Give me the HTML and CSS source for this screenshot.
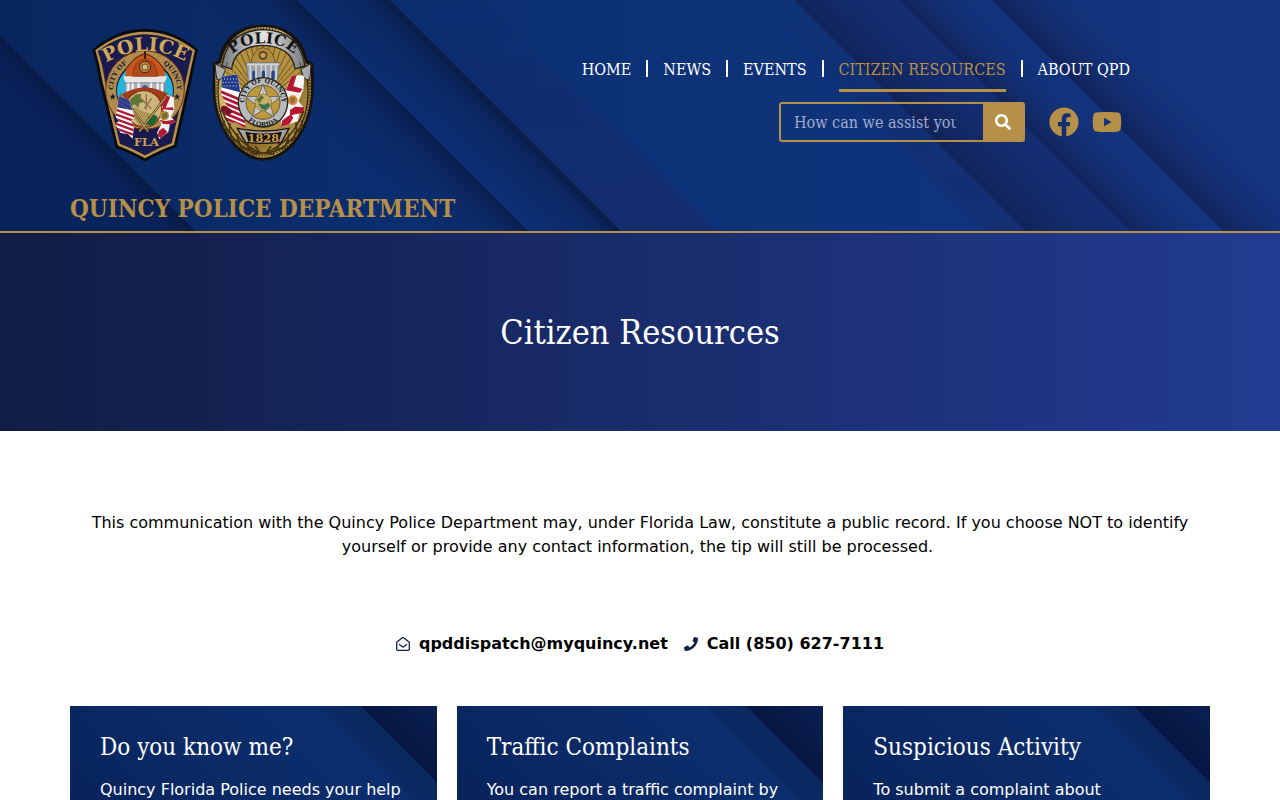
FILE: index.html
```
<!DOCTYPE html>
<html lang="en">
<head>
  <meta charset="UTF-8">
  <meta name="viewport" content="width=device-width, initial-scale=1">
  <title>Citizen Resources - Quincy Police Department</title>
  <link rel="stylesheet" href="styles.css">
</head>
<body>
  <header class="site-header">
    <!-- diagonal bands behind the header -->
    <svg class="header-bg" viewBox="0 0 1280 231" preserveAspectRatio="xMidYMid slice" aria-hidden="true">
      <defs>
        <linearGradient id="base" x1="0" x2="1" y1="0" y2="0">
          <stop offset="0" stop-color="#09265e"/>
          <stop offset=".3" stop-color="#0b2e70"/>
          <stop offset=".6" stop-color="#0e3379"/>
          <stop offset="1" stop-color="#14347f"/>
        </linearGradient>
        <linearGradient id="fadeLeft">
          <stop offset="0" stop-color="#0b1c4c" stop-opacity="0"/>
          <stop offset=".7" stop-color="#0b1c4c" stop-opacity=".35"/>
          <stop offset="1" stop-color="#081538" stop-opacity=".75"/>
        </linearGradient>
        <linearGradient id="fadeRight">
          <stop offset="0" stop-color="#101f52" stop-opacity=".8"/>
          <stop offset=".4" stop-color="#13265f" stop-opacity=".5"/>
          <stop offset="1" stop-color="#162c6c" stop-opacity="0"/>
        </linearGradient>
        <linearGradient id="bandDown" x1="0" x2="0" y1="0" y2="1">
          <stop offset="0" stop-color="#0c2a66" stop-opacity=".3"/>
          <stop offset="1" stop-color="#172b6b"/>
        </linearGradient>
      </defs>
      <rect width="1280" height="231" fill="url(#base)"/>
      <g transform="skewX(45)">
        <rect x="-240" width="204" height="231" fill="#08215a" opacity=".6"/>
        <rect x="-116" width="80" height="231" fill="url(#fadeLeft)"/>
        <rect x="190" width="107" height="231" fill="url(#fadeLeft)" opacity=".9"/>
        <rect x="297" width="93" height="231" fill="url(#fadeLeft)"/>
        <rect x="390" width="95" height="231" fill="url(#bandDown)" opacity=".8"/>
        <rect x="755" width="40" height="231" fill="url(#bandDown)" opacity=".6"/>
        <rect x="795" width="105" height="231" fill="#15296a" opacity=".6"/>
        <rect x="795" width="100" height="231" fill="url(#fadeRight)"/>
        <rect x="900" width="70" height="231" fill="url(#fadeRight)"/>
        <rect x="992" width="90" height="231" fill="url(#fadeRight)"/>
      </g>
    </svg>

    <div class="container header-inner">
      <div class="brand">
        <div class="logos">
          <svg class="logo-patch" viewBox="0 0 360 465" role="img" aria-label="Quincy Police patch">
            <defs>
              <path id="patchTop" d="M64 152Q195 66 330 148"/>
              <path id="patchCity" d="M99 226A97 97 0 0 1 142 146"/>
              <path id="patchQuincy" d="M248 146A97 97 0 0 1 291 226"/>
              <clipPath id="patchDisc"><circle cx="195" cy="228" r="84"/></clipPath>
              <clipPath id="patchUsa"><path d="M118 244L147 254 164 306 153 318 162 333 158 372 144 357 122 354 104 326 117 319 107 305Z"/></clipPath>
            </defs>
            <path d="M37 104Q108 42 195 41Q282 42 354 104Q344 143 334 198L289 397Q240 412 195 440Q150 413 107 400L58 198Q51 150 37 104Z" fill="#0a0b10"/>
            <path d="M46 106Q113 51 195 50Q277 51 345 106Q335 150 325 198L282 390Q240 405 195 430Q150 405 114 392L67 198Q59 148 46 106Z" fill="#b6904e"/>
            <path d="M55 109Q115 60 195 59Q275 60 336 109Q326 150 316 198L274 384Q238 396 195 420Q152 396 121 386L76 198Q69 148 55 109Z" fill="#191b50" stroke="#0d0e25" stroke-width="2"/>
            <circle cx="195" cy="225" r="118" fill="#b08c4c" stroke="#6e2d18" stroke-width="3"/>
            <circle cx="195" cy="226" r="87" fill="#17162c"/>
            <path d="M195 116Q228 124 252 162L281 230H109L138 162Q162 124 195 116Z" fill="#c9571d" stroke="#35160f" stroke-width="3"/>
            <g clip-path="url(#patchDisc)">
              <path d="M105 160L137 166 137 235 120 260 100 240Z" fill="#27b2dd"/>
              <path d="M290 160L254 166 255 235 270 260 290 240Z" fill="#27b2dd"/>
              <path d="M130 184H261L254 203H136Z" fill="#e8e6e3"/>
              <path d="M137 201H253V238H137Z" fill="#aab0bd"/>
              <path d="M145 202V236M158 202V240M176 202V242M213 202V242M233 202V240M246 202V236" stroke="#f5f2ee" stroke-width="7"/>
              <path d="M186 240V215Q195 205 204 215V240Z" fill="#4a577e"/>
              <path d="M135 204H255" stroke="#797d89" stroke-width="2"/>
              <path d="M115 245Q195 190 275 245V320H115Z" fill="#a33d18"/>
            </g>
            <path d="M158 184Q160 138 195 132Q230 138 233 184Z" fill="#b04a1c" stroke="#7c2f12" stroke-width="2"/>
            <path d="M195 106V132" stroke="#30120e" stroke-width="5"/>
            <circle cx="195" cy="156" r="17" fill="#b8863c" stroke="#512413" stroke-width="3"/>
            <circle cx="195" cy="156" r="9" fill="#ddbd76" stroke="#665036" stroke-width="3"/>
            <circle cx="191" cy="281" r="55" fill="#cdb77b" stroke="#8d3518" stroke-width="5"/>
            <path d="M151 253L168 238 184 237 181 250 193 260 177 265 176 279 164 268 148 278Z" fill="#637437"/>
            <path d="M199 237V285M182 250L214 281M215 250L193 280" stroke="#8d734a" stroke-width="4"/>
            <path d="M143 281Q163 269 188 289L226 300V321Q207 340 178 332Z" fill="#af9657"/>
            <path d="M206 304L227 300 234 309 217 332 199 329Z" fill="#126a36"/>
            <path d="M122 237L205 350M264 237L178 350" stroke="#2b1d0e" stroke-width="7"/>
            <path d="M122 237L205 350M264 237L178 350" stroke="#c8a45c" stroke-width="4"/>
            <g clip-path="url(#patchUsa)">
              <path d="M98 240H170V375H98Z" fill="#fff"/>
              <path d="M96 280L168 306M96 294L168 320M96 308L168 334M96 322L168 348M96 336L168 362M96 350L168 376M96 364L168 390" stroke="#a91e39" stroke-width="7"/>
              <path d="M96 238L149 248 157 286 100 275Z" fill="#303a87"/>
              <path d="M116 252L149 270M111 262L148 282" stroke="#b1b8e1" stroke-width="2" stroke-dasharray="2 5"/>
            </g>
            <path d="M264 240L281 247 283 285 272 305 287 320 270 328 265 351 238 373 231 352 245 326 237 314 251 285 246 276Z" fill="#f6f1f0"/>
            <path d="M260 242L271 245 257 278 279 277 281 286 248 283 248 271ZM238 314L257 318 282 314 287 322 269 328 250 327ZM236 348L250 338 262 351 243 370 234 363Z" fill="#b01b32"/>
            <circle cx="253" cy="302" r="14" fill="#b88a3e"/>
            <path d="M246 298L261 291 263 306 249 313Z" fill="#6c713b"/>
            <g fill="#211c38">
              <path d="M98 235L101 242 108 242 102 247 104 254 98 250 92 254 94 247 88 242 95 242Z"/>
              <path d="M291 235L294 242 301 242 295 247 297 254 291 250 285 254 287 247 281 242 288 242Z"/>
            </g>
            <text class="patch-title"><textPath href="#patchTop" startOffset="50%">POLICE</textPath></text>
            <text class="patch-small"><textPath href="#patchCity" startOffset="50%">CITY OF</textPath></text>
            <text class="patch-small"><textPath href="#patchQuincy" startOffset="50%">QUINCY</textPath></text>
            <text class="patch-fla" x="199" y="393">FLA</text>
          </svg>
          <svg class="logo-badge" viewBox="0 0 375 465" role="img" aria-label="Quincy Police badge">
            <defs>
              <linearGradient id="gold" x1="0" x2="1" y1="0" y2="1">
                <stop offset="0" stop-color="#816427"/>
                <stop offset=".35" stop-color="#d8bb68"/>
                <stop offset=".65" stop-color="#8b6b25"/>
                <stop offset="1" stop-color="#dec070"/>
              </linearGradient>
              <linearGradient id="silver" x1="0" x2="1" y1="0" y2="0">
                <stop offset="0" stop-color="#77797c"/>
                <stop offset=".5" stop-color="#e5e5e5"/>
                <stop offset="1" stop-color="#77797c"/>
              </linearGradient>
              <path id="badgeTop" d="M84 143Q105 86 189 85Q273 86 296 143"/>
              <path id="badgeCity" d="M133 259A56 56 0 0 1 245 259"/>
              <path id="badgeFlorida" d="M123 269A66 66 0 0 0 255 269"/>
              <clipPath id="badgeUsa"><path d="M66 185L111 178 125 235 115 269 135 310 135 339 108 323 81 324 64 285 83 276 63 237Z"/></clipPath>
            </defs>
            <path d="M189 29C117 29 68 66 55 136L38 145V229C42 342 113 437 190 437C267 437 338 342 341 229V145L323 136C309 66 261 29 189 29Z" fill="#15130f"/>
            <path d="M189 36C121 37 78 78 63 143L46 153V229C50 334 117 428 190 428C263 428 330 334 333 229V153L316 143C301 78 257 37 189 36Z" fill="url(#gold)"/>
            <ellipse cx="189" cy="230" rx="135" ry="184" fill="none" stroke="#302615" stroke-width="4"/>
            <ellipse cx="189" cy="230" rx="141" ry="190" fill="none" stroke="#493615" stroke-width="6" stroke-dasharray="4 5"/>
            <ellipse cx="189" cy="213" rx="116" ry="139" fill="#b39242"/>
            <g stroke="#705518" stroke-width="3">
              <path d="M189 260L75 190M189 260L78 170M189 260L83 151M189 260L92 135M189 260L104 122M189 260L119 110M189 260L136 98M189 260L153 92M189 260L170 88M189 260V84M189 260L208 88M189 260L226 92M189 260L244 98M189 260L261 110M189 260L277 122M189 260L289 135M189 260L298 151M189 260L304 170M189 260L310 190"/>
            </g>
            <path d="M45 146L77 163 67 187Q51 206 48 178ZM333 146L302 163 312 187Q328 206 331 178Z" fill="#a9abae" stroke="#252421" stroke-width="3"/>
            <path d="M66 153Q81 47 189 44Q298 47 315 153L285 162Q276 94 189 91Q103 94 95 162Z" fill="url(#silver)" stroke="#25221c" stroke-width="4"/>
            <path d="M82 142Q79 150 80 155M299 142Q302 150 301 155" stroke="#45413a" stroke-width="3" fill="none"/>
            <path d="M153 150Q155 104 189 98Q224 104 226 150Z" fill="#b38b3f" stroke="#745920" stroke-width="3"/>
            <circle cx="189" cy="121" r="13" fill="#4e3d20"/>
            <circle cx="189" cy="121" r="8" fill="#c39c50"/>
            <path d="M139 143H239L232 198H145Z" fill="#9da2ac" stroke="#686d78" stroke-width="2"/>
            <path d="M141 148H238M151 150V195M168 150V195M184 150V195M197 150V195M213 150V195M228 150V195" stroke="#d3d4d5" stroke-width="5"/>
            <path d="M157 193V170Q161 163 165 170V193ZM185 193V170Q190 163 195 170V193ZM214 193V170Q219 163 224 170V193Z" fill="#204788"/>
            <g clip-path="url(#badgeUsa)">
              <path d="M55 175H145V350H55Z" fill="#fafafa"/>
              <path d="M55 227L144 264M55 242L144 279M55 257L144 294M55 272L144 309M55 287L144 324M55 302L144 339M55 317L144 354" stroke="#ac1836" stroke-width="8"/>
              <path d="M60 178H116L120 232 61 216Z" fill="#233c8a"/>
              <path d="M72 192H112M68 202H116M71 213H116" stroke="#d8ddee" stroke-width="3" stroke-dasharray="3 6"/>
            </g>
            <path d="M63 276Q73 267 88 280L99 291 83 302Q74 286 63 291Z" fill="#781626"/>
            <path d="M276 184Q297 178 313 182L310 225 295 258 312 280 298 297 293 318 246 337 242 315 256 285 249 251 262 211Z" fill="#f8f5f5"/>
            <path d="M275 184L290 180 280 214 308 222 299 233 258 226 264 209ZM270 285L285 275 313 277 308 294 285 298 270 302ZM246 317L272 298 280 308 268 328 244 336Z" fill="#b51731"/>
            <circle cx="278" cy="256" r="15" fill="#cd8e3d"/>
            <path d="M270 249L284 245 286 260 273 268Z" fill="#9d6c3a"/>
            <circle cx="189" cy="262" r="76" fill="#222119"/>
            <circle cx="189" cy="262" r="72" fill="#b9babb"/>
            <circle cx="189" cy="262" r="51" fill="#bd983c" stroke="#5f5438" stroke-width="3"/>
            <path d="M189 207L203 245 242 245 211 269 222 306 189 284 156 306 168 269 136 245 175 245Z" fill="#d2d2d0" stroke="#65645f" stroke-width="3"/>
            <path d="M189 212V282M139 247L210 269M239 247L168 269M158 303L189 257M220 303L189 257" stroke="#929292" stroke-width="2"/>
            <circle cx="190" cy="262" r="25" fill="#c8ad65" stroke="#7c6738" stroke-width="2"/>
            <path d="M169 254L183 240 193 248 184 255 180 266Z" fill="#63733d"/>
            <path d="M174 266L193 269 205 263 211 270 198 285 184 281Z" fill="#337650"/>
            <text class="badge-title"><textPath href="#badgeTop" startOffset="50%">POLICE</textPath></text>
            <text class="badge-small"><textPath href="#badgeCity" startOffset="50%">CITY OF QUINCY</textPath></text>
            <text class="badge-small"><textPath href="#badgeFlorida" startOffset="50%">FLORIDA</textPath></text>
            <g fill="none" stroke="#443212" stroke-width="5">
              <path d="M67 288Q105 382 183 415M311 288Q275 382 195 415"/>
              <path d="M72 316L71 339 88 351 90 323M91 349L95 373 114 380 112 355M117 376L122 398 145 404 142 380M148 397L160 418 180 414 166 394M305 316L306 339 290 351 288 323M286 349L282 373 264 380 266 355M261 376L255 398 234 404 237 380M230 397L218 418 198 414 213 394"/>
            </g>
            <path d="M112 340Q190 356 267 340L244 382Q190 388 137 382Z" fill="#a5a39b" stroke="#1b1812" stroke-width="4"/>
            <path d="M136 350Q190 361 246 350L237 380Q190 384 145 380Z" fill="#17120e"/>
            <text class="badge-year" x="190" y="380">1828</text>
          </svg>
        </div>
        <a class="site-name" href="#">QUINCY POLICE DEPARTMENT</a>
      </div>

      <div class="header-right">
        <nav>
          <ul class="main-nav">
            <li><a href="#">HOME</a></li>
            <li><a href="#">NEWS</a></li>
            <li><a href="#">EVENTS</a></li>
            <li><a href="#" class="active">CITIZEN RESOURCES</a></li>
            <li><a href="#">ABOUT QPD</a></li>
          </ul>
        </nav>
        <div class="header-tools">
          <form class="search" role="search">
            <input type="text" placeholder="How can we assist you?" aria-label="Search">
            <button type="submit" aria-label="Search">
              <svg viewBox="0 0 512 512"><path d="M505 442.7L405.3 343c-4.5-4.5-10.6-7-17-7H372c27.6-35.3 44-79.7 44-128C416 93.1 322.9 0 208 0S0 93.1 0 208s93.1 208 208 208c48.3 0 92.7-16.4 128-44v16.3c0 6.4 2.5 12.5 7 17l99.7 99.7c9.4 9.4 24.6 9.4 33.9 0l28.3-28.3c9.4-9.4 9.4-24.6.1-34zM208 336c-70.7 0-128-57.2-128-128 0-70.7 57.2-128 128-128 70.7 0 128 57.2 128 128 0 70.7-57.2 128-128 128z"/></svg>
            </button>
          </form>
          <div class="social">
            <a href="#" aria-label="Facebook">
              <svg viewBox="0 0 512 512"><path d="M504 256C504 119 393 8 256 8S8 119 8 256c0 123.78 90.69 226.38 209.25 245V327.69h-63V256h63v-54.64c0-62.15 37-96.48 93.67-96.48 27.14 0 55.52 4.84 55.52 4.84v61h-31.28c-30.8 0-40.41 19.12-40.41 38.73V256h68.78l-11 71.69h-57.78V501C413.31 482.38 504 379.78 504 256z"/></svg>
            </a>
            <a href="#" aria-label="YouTube">
              <svg viewBox="0 0 576 512"><path d="M549.655 124.083c-6.281-23.65-24.787-42.276-48.284-48.597C458.781 64 288 64 288 64S117.22 64 74.629 75.486c-23.497 6.322-42.003 24.947-48.284 48.597-11.412 42.867-11.412 132.305-11.412 132.305s0 89.438 11.412 132.305c6.281 23.65 24.787 41.5 48.284 47.821C117.22 448 288 448 288 448s170.78 0 213.371-11.486c23.497-6.321 42.003-24.171 48.284-47.821 11.412-42.867 11.412-132.305 11.412-132.305s0-89.438-11.412-132.305zm-317.51 213.508V175.185l142.739 81.205-142.739 81.201z"/></svg>
            </a>
          </div>
        </div>
      </div>
    </div>
  </header>

  <section class="page-title">
    <h1>Citizen Resources</h1>
  </section>

  <main class="container">
    <p class="intro">This communication with the Quincy Police Department may, under Florida Law, constitute a public record. If you choose NOT to identify yourself or provide any contact information, the tip will still be processed.&nbsp;</p>

    <ul class="contact">
      <li>
        <a href="mailto:qpddispatch@myquincy.net">
          <svg class="icon-mail" viewBox="0 0 14 14"><path d="M.7 5.2L6 1q1-.8 2 0l5.3 4.2v7q0 1.1-1.1 1.1H1.8Q.7 13.3.7 12.2zM3 7.2l3 2.4q1 .8 2 0l3-2.4"/></svg>
          qpddispatch@myquincy.net
        </a>
      </li>
      <li>
        <a href="tel:8506277111">
          <svg viewBox="0 0 512 512"><path d="M493.4 24.6l-104-24c-11.3-2.6-22.9 3.3-27.5 13.9l-48 112c-4.2 9.8-1.4 21.3 6.9 28l60.6 49.6c-36 76.7-98.9 140.5-177.2 177.2l-49.6-60.6c-6.8-8.3-18.2-11.1-28-6.9l-112 48C3.9 366.5-2 378.1.6 389.4l24 104C27.1 504.2 36.7 512 48 512c256.1 0 464-207.5 464-464 0-11.2-7.7-20.9-18.6-23.4z"/></svg>
          Call (850) 627-7111
        </a>
      </li>
    </ul>

    <div class="cards">
      <article class="card">
        <h2>Do you know me?</h2>
        <p>Quincy Florida Police needs your help</p>
      </article>
      <article class="card">
        <h2>Traffic Complaints</h2>
        <p>You can report a traffic complaint by</p>
      </article>
      <article class="card">
        <h2>Suspicious Activity</h2>
        <p>To submit a complaint about</p>
      </article>
    </div>
  </main>
</body>
</html>
```
FILE: styles.css
```
:root {
  --gold: #b68f48;
  --navy: #12204b;
  --serif: "DejaVu Serif Condensed", "DejaVu Serif", serif;
  --sans: "DejaVu Sans", sans-serif;
}

* {
  box-sizing: border-box;
}

body {
  margin: 0;
  font-family: var(--sans);
  font-size: 16px;
  line-height: 24px;
  color: #000;
  background: #fff;
}

a {
  color: inherit;
  text-decoration: none;
}

.container {
  max-width: 1140px;
  margin: 0 auto;
}

/* header */
.site-header {
  position: relative;
  background: #0c2d6c;
  border-bottom: 2px solid var(--gold);
}

.header-bg {
  position: absolute;
  inset: 0;
  width: 100%;
  height: 100%;
}

.header-inner {
  position: relative;
  display: flex;
  justify-content: space-between;
}

.brand {
  padding: 15px 0 7px;
}

.logos {
  display: flex;
  padding-left: 10px;
  margin-bottom: 24px;
}

.logos svg {
  height: 155px;
}

.logo-patch {
  width: 120px;
}

.logo-badge {
  width: 125px;
}

.logos text {
  font-family: "DejaVu Serif", serif;
  font-weight: bold;
  text-anchor: middle;
}

.patch-title {
  font-size: 57px;
  fill: #d2a955;
}

.patch-small {
  font-size: 20px;
  fill: #211c38;
}

.patch-fla {
  font-size: 34px;
  fill: #c9a050;
}

.badge-title {
  font-size: 46px;
  fill: #141414;
}

.badge-small {
  font-size: 19px;
  fill: #1c1c1c;
}

.badge-year {
  font-size: 34px;
  fill: #d09c45;
}

.site-name {
  display: block;
  font-family: var(--serif);
  font-size: 24px;
  font-weight: bold;
  line-height: 30px;
  color: var(--gold);
}

.header-right {
  display: flex;
  flex-direction: column;
  align-items: flex-end;
  padding: 58px 80px 0 0;
}

.main-nav {
  display: flex;
  align-items: flex-start;
  margin: 0 0 10px;
  padding: 0;
  list-style: none;
  font-family: var(--serif);
  color: #fff;
}

.main-nav li {
  display: flex;
}

.main-nav li + li::before {
  content: "";
  width: 2px;
  height: 17px;
  margin: 2px 15px 0;
  background: #fff;
}

.main-nav a {
  padding-bottom: 7px;
  border-bottom: 3px solid transparent;
}

.main-nav .active {
  color: var(--gold);
  border-color: var(--gold);
}

.header-tools {
  display: flex;
  align-items: center;
  gap: 24px;
  padding-right: 8px;
}

.search {
  display: flex;
  height: 40px;
  border: 2px solid var(--gold);
  border-radius: 3px;
}

.search input {
  width: 202px;
  padding: 0 27px 0 13px;
  border: 0;
  background: transparent;
  font-family: var(--serif);
  font-size: 16px;
  color: #fff;
}

.search input::placeholder {
  color: #a0aaca;
}

.search button {
  display: grid;
  place-items: center;
  width: 40px;
  padding: 0;
  border: 0;
  background: var(--gold);
  cursor: pointer;
}

.search svg {
  width: 16px;
  height: 16px;
  fill: #fff;
}

.social {
  display: flex;
  gap: 13px;
}

.social a {
  display: flex;
}

.social svg {
  width: 30px;
  height: 30px;
  fill: var(--gold);
}

/* title banner */
.page-title {
  padding: 74px 20px;
  text-align: center;
  background: linear-gradient(90deg, #111d45, #223b91);
}

.page-title h1 {
  margin: 0;
  font-family: var(--serif);
  font-size: 34px;
  font-weight: normal;
  line-height: 50px;
  color: #fff;
}

/* content */
.intro {
  margin: 0;
  padding: 80px 20px 73px;
  text-align: center;
}

.contact {
  display: flex;
  justify-content: center;
  gap: 16px;
  margin: 0 0 50px;
  padding: 0;
  list-style: none;
  font-weight: bold;
}

.contact a {
  display: flex;
  align-items: center;
  gap: 9px;
}

.contact svg {
  width: 14px;
  height: 14px;
  fill: var(--navy);
}

.contact .icon-mail {
  fill: none;
  stroke: var(--navy);
  stroke-width: 1.3;
}

.cards {
  display: grid;
  grid-template-columns: repeat(3, 1fr);
  gap: 20px;
}

.card {
  padding: 26px 30px 30px;
  color: #fff;
  background: linear-gradient(225deg, #0a2152 0, #071643 54px, #0b285f 54px, #0b2a65 83px, #0b2e6e 83px, #0b2c69 160px, #08225a 100%);
}

.card h2 {
  margin: 0 0 16px;
  font-family: var(--serif);
  font-size: 24px;
  font-weight: normal;
  line-height: 30px;
}

.card p {
  margin: 0;
}

@media (max-width: 900px) {
  .header-inner {
    flex-direction: column;
  }

  .header-right {
    padding: 20px;
  }

  .cards {
    grid-template-columns: 1fr;
  }
}
```
